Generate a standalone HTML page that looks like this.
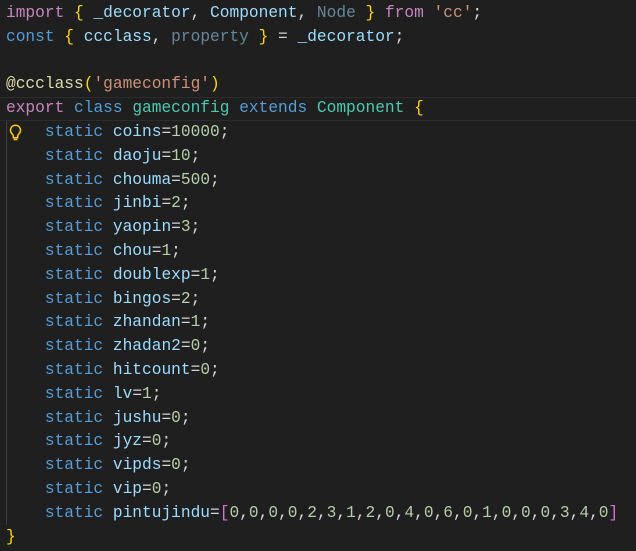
<!DOCTYPE html>
<html><head><meta charset="utf-8"><style>
html,body{margin:0;padding:0;background:#1f1f1f;width:636px;height:551px;overflow:hidden}
.c{position:absolute;left:6px;top:2px;font-family:"Liberation Mono",monospace;font-size:16.2px;line-height:23.8px;color:#d4d4d4}
.l{height:23.8px;white-space:pre}
.k{color:#c586c0}.b{color:#569cd6}.v{color:#9cdcfe}.y{color:#ffd700}.p{color:#da70d6}
.t{color:#4ec9b0}.s{color:#ce9178}.n{color:#b5cea8}.f{color:#dcdcaa}.d{color:#9cdcfe;opacity:.55}
.cur{position:absolute;left:0;top:97px;width:636px;height:22px;border-top:1px solid #2c2c2c;border-bottom:1px solid #2c2c2c}
.g{position:absolute;left:6px;top:121px;width:1px;height:404px;background:#404040}
</style></head><body>
<div class="cur"></div>
<div class="g"></div>
<svg style="position:absolute;left:9px;top:124px" width="13" height="17" viewBox="0 0 13 17"><path d="M6.5 1.2a5 5 0 0 0-3.2 8.8c.7.7 1 1.5 1 2.4v1.3h4.4v-1.3c0-.9.3-1.7 1-2.4a5 5 0 0 0-3.2-8.8z" fill="none" stroke="#ffcc00" stroke-width="1.5"/><path d="M4.6 15.5h3.8" stroke="#ffcc00" stroke-width="1.5"/></svg>
<div class="c"><div class="l"><span class="k">import</span> <span class="y">{</span> <span class="v">_decorator</span>, <span class="v">Component</span>, <span class="d">Node</span> <span class="y">}</span> <span class="k">from</span> <span class="s">'cc'</span>;</div><div class="l"><span class="b">const</span> <span class="y">{</span> <span class="v">ccclass</span>, <span class="d">property</span> <span class="y">}</span> = <span class="v">_decorator</span>;</div><div class="l"> </div><div class="l"><span class="f">@ccclass</span><span class="y">(</span><span class="s">'gameconfig'</span><span class="y">)</span></div><div class="l"><span class="k">export</span> <span class="b">class</span> <span class="t">gameconfig</span> <span class="b">extends</span> <span class="t">Component</span> <span class="y">{</span></div><div class="l">    <span class="b">static</span> <span class="v">coins</span>=<span class="n">10000</span>;</div><div class="l">    <span class="b">static</span> <span class="v">daoju</span>=<span class="n">10</span>;</div><div class="l">    <span class="b">static</span> <span class="v">chouma</span>=<span class="n">500</span>;</div><div class="l">    <span class="b">static</span> <span class="v">jinbi</span>=<span class="n">2</span>;</div><div class="l">    <span class="b">static</span> <span class="v">yaopin</span>=<span class="n">3</span>;</div><div class="l">    <span class="b">static</span> <span class="v">chou</span>=<span class="n">1</span>;</div><div class="l">    <span class="b">static</span> <span class="v">doublexp</span>=<span class="n">1</span>;</div><div class="l">    <span class="b">static</span> <span class="v">bingos</span>=<span class="n">2</span>;</div><div class="l">    <span class="b">static</span> <span class="v">zhandan</span>=<span class="n">1</span>;</div><div class="l">    <span class="b">static</span> <span class="v">zhadan2</span>=<span class="n">0</span>;</div><div class="l">    <span class="b">static</span> <span class="v">hitcount</span>=<span class="n">0</span>;</div><div class="l">    <span class="b">static</span> <span class="v">lv</span>=<span class="n">1</span>;</div><div class="l">    <span class="b">static</span> <span class="v">jushu</span>=<span class="n">0</span>;</div><div class="l">    <span class="b">static</span> <span class="v">jyz</span>=<span class="n">0</span>;</div><div class="l">    <span class="b">static</span> <span class="v">vipds</span>=<span class="n">0</span>;</div><div class="l">    <span class="b">static</span> <span class="v">vip</span>=<span class="n">0</span>;</div><div class="l">    <span class="b">static</span> <span class="v">pintujindu</span>=<span class="p">[</span><span class="n">0</span>,<span class="n">0</span>,<span class="n">0</span>,<span class="n">0</span>,<span class="n">2</span>,<span class="n">3</span>,<span class="n">1</span>,<span class="n">2</span>,<span class="n">0</span>,<span class="n">4</span>,<span class="n">0</span>,<span class="n">6</span>,<span class="n">0</span>,<span class="n">1</span>,<span class="n">0</span>,<span class="n">0</span>,<span class="n">0</span>,<span class="n">3</span>,<span class="n">4</span>,<span class="n">0</span><span class="p">]</span></div><div class="l"><span class="y">}</span></div></div>
</body></html>
